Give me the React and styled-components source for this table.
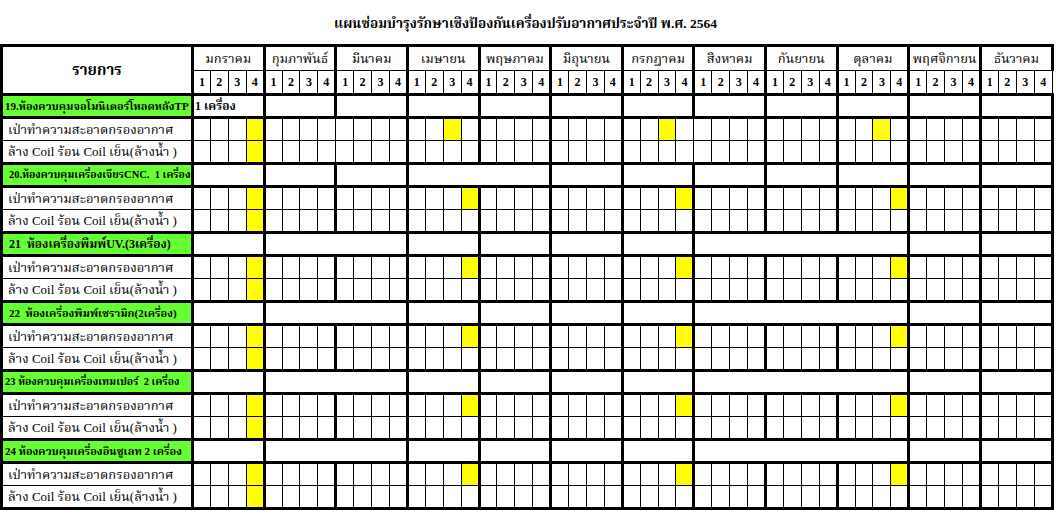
import styled, { createGlobalStyle } from 'styled-components';

const GlobalStyle = createGlobalStyle`
  html, body {
    margin: 0;
    padding: 0;
    background: #fff;
  }
  body {
    font-family: "Liberation Serif", "Noto Serif Thai", serif;
    color: #000;
  }
`;

const Page = styled.div`
  width: 1059px;
  height: 516px;
  overflow: hidden;
`;

const Title = styled.h1`
  margin: 0;
  height: 44px;
  padding-top: 13px;
  box-sizing: border-box;
  padding-right: 8px;
  text-align: center;
  font-size: 13.5px;
  font-weight: bold;
  line-height: 22px;
`;

const Sheet = styled.table`
  border-collapse: collapse;
  table-layout: fixed;
  width: 1054px;
  margin-left: 0;
  line-height: 16px;
`;

const Row = styled.tr`
  height: ${(p) => p.$h || 23}px;
`;

const thick = '3px solid #000';
const thin = '1px solid #000';

const HeadLabel = styled.th`
  border: ${thick};
  font-size: 15px;
  font-weight: bold;
  text-align: center;
  padding: 0;
`;

const MonthHead = styled.th`
  border: ${thick};
  border-bottom: ${thin};
  font-size: 13px;
  font-weight: normal;
  text-align: center;
  padding: 0;
  white-space: nowrap;
  overflow: hidden;
`;

const WeekHead = styled.th`
  border: ${thin};
  border-left: ${(p) => (p.$first ? thick : thin)};
  border-bottom: ${thick};
  font-size: 12px;
  font-weight: bold;
  text-align: center;
  padding: 0;
`;

const SectionLabel = styled.td`
  border: ${thick};
  background: #66ff33;
  font-size: ${(p) => p.$size || 11}px;
  font-weight: bold;
  padding: 0 0 0 ${(p) => (p.$indent ? 6 : 2)}px;
  white-space: pre;
  overflow: hidden;
`;

const SectionCell = styled.td`
  border: ${thick};
  font-size: 12px;
  font-weight: bold;
  padding: 0 0 0 1px;
  white-space: nowrap;
  overflow: hidden;
`;

const TaskLabel = styled.td`
  border-left: ${thick};
  border-right: ${thick};
  border-bottom: ${(p) => (p.$last ? thick : thin)};
  font-size: 13px;
  padding: 0 0 0 5px;
  white-space: nowrap;
  overflow: hidden;
`;

const WeekCell = styled.td`
  border: ${thin};
  border-left: ${(p) => (p.$first ? thick : thin)};
  border-right: ${(p) => (p.$end ? thick : thin)};
  border-bottom: ${(p) => (p.$last ? thick : thin)};
  background: ${(p) => (p.$on ? '#ffff00' : '#fff')};
  padding: 0;
`;

const months = [
  'มกราคม',
  'กุมภาพันธ์',
  'มีนาคม',
  'เมษายน',
  'พฤษภาคม',
  'มิถุนายน',
  'กรกฎาคม',
  'สิงหาคม',
  'กันยายน',
  'ตุลาคม',
  'พฤศจิกายน',
  'ธันวาคม',
];

const tasks = ['เป่าทำความสะอาดกรองอากาศ', 'ล้าง Coil ร้อน Coil เย็น(ล้างน้ำ )'];

// spans = เดือนที่ merge กันในแถวหัวข้อ, clean = สัปดาห์ที่ทำ (0 = ไม่มี)
const wide = [1, 2, 1, 1, 1, 1, 3, 1, 1];
const plan = [4, 0, 0, 4, 0, 0, 4, 0, 0, 4, 0, 0];
const sections = [
  {
    title: '19.ห้องควบคุมจอโมนิเตอร์โหลดหลังTP',
    note: '1 เครื่อง',
    size: 11,
    spans: [1, 1, 1, 1, 1, 1, 1, 1, 1, 1, 1, 1],
    clean: [4, 0, 0, 3, 0, 0, 3, 0, 0, 3, 0, 0],
    thin: [2, 7],
  },
  {
    title: '20.ห้องควบคุมเครื่องเจียรCNC.  1 เครื่อง',
    indent: true,
    size: 10.5,
    spans: [1, 1, 1, 2, 1, 1, 1, 1, 1, 1, 1],
    clean: plan,
    thin: [],
  },
  {
    title: '21  ห้องเครื่องพิมพ์UV.(3เครื่อง)',
    indent: true,
    size: 12,
    spans: wide,
    clean: plan,
    thin: [],
  },
  {
    title: '22  ห้องเครื่องพิมพ์เซรามิก(2เครื่อง)',
    indent: true,
    size: 11,
    spans: wide,
    clean: plan,
    thin: [],
  },
  {
    title: '23 ห้องควบคุมเครื่องเทมเปอร์  2 เครื่อง',
    size: 10.5,
    spans: wide,
    clean: plan,
    thin: [],
  },
  {
    title: '24 ห้องควบคุมเครื่องอินซูเลท 2 เครื่อง',
    size: 11,
    spans: wide,
    clean: plan,
    thin: [],
  },
];

const weeks = [1, 2, 3, 4];

function Section({ s }) {
  return (
    <>
      <Row>
        <SectionLabel $indent={s.indent} $size={s.size}>
          {s.title}
        </SectionLabel>
        {s.spans.map((n, i) => (
          <SectionCell key={i} colSpan={n * 4}>
            {i === 0 ? s.note : null}
          </SectionCell>
        ))}
      </Row>
      {tasks.map((t, r) => (
        <Row key={r}>
          <TaskLabel $last={r === 1}>{t}</TaskLabel>
          {months.map((m, mi) =>
            weeks.map((w) => (
              <WeekCell
                key={m + w}
                $first={w === 1 && !s.thin.includes(mi)}
                $end={mi === 11 && w === 4}
                $last={r === 1}
                $on={r === 0 ? s.clean[mi] === w : mi === 0 && w === 4}
              />
            ))
          )}
        </Row>
      ))}
    </>
  );
}

export default function App() {
  return (
    <Page>
      <GlobalStyle />
      <Title>แผนซ่อมบำรุงรักษาเชิงป้องกันเครื่องปรับอากาศประจำปี พ.ศ. 2564</Title>
      <Sheet>
        <colgroup>
          <col style={{ width: 191 }} />
          {months.map((m) => weeks.map((w) => <col key={m + w} />))}
        </colgroup>
        <thead>
          <Row $h={25}>
            <HeadLabel rowSpan={2}>รายการ</HeadLabel>
            {months.map((m) => (
              <MonthHead key={m} colSpan={4}>
                {m}
              </MonthHead>
            ))}
          </Row>
          <Row $h={24}>
            {months.map((m) =>
              weeks.map((w) => (
                <WeekHead key={m + w} $first={w === 1}>
                  {w}
                </WeekHead>
              ))
            )}
          </Row>
        </thead>
        <tbody>
          {sections.map((s, i) => (
            <Section key={i} s={s} />
          ))}
        </tbody>
      </Sheet>
    </Page>
  );
}
